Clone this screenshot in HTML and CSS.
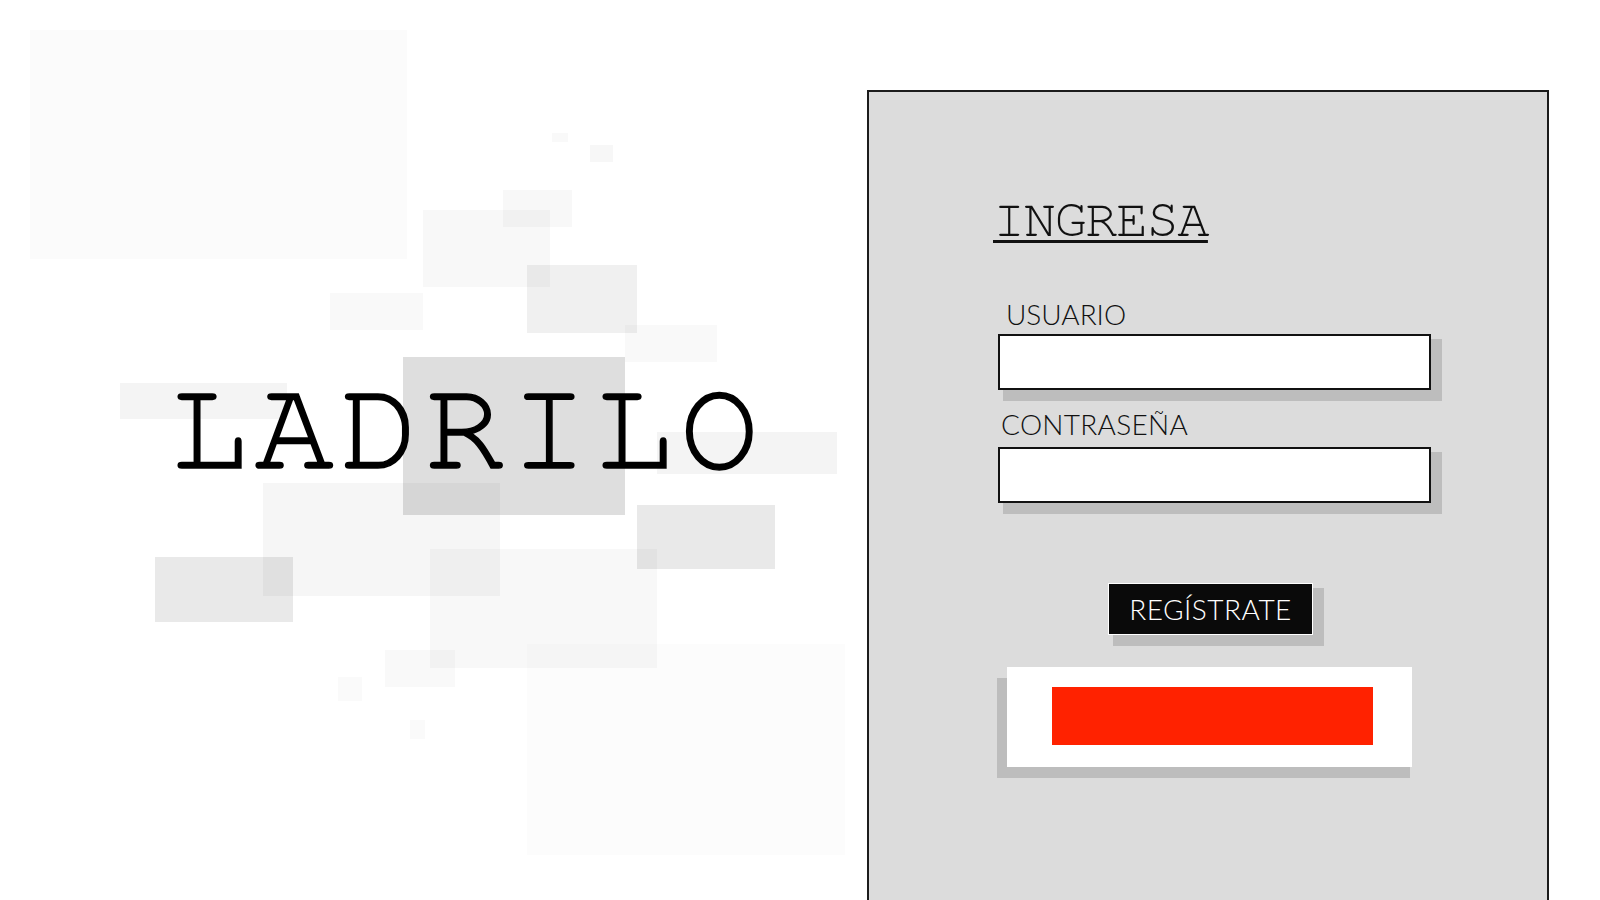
FILE: index.html
```html
<!DOCTYPE html>
<html lang="es">
<head>
<meta charset="utf-8">
<title>Ladrilo - Ingresa</title>
<link rel="stylesheet" href="styles.css">
</head>
<body>
<div class="page">
  <section class="hero">
    <div class="blk b1"></div>
    <div class="blk b2"></div>
    <div class="blk b3"></div>
    <div class="blk b4"></div>
    <div class="blk b5"></div>
    <div class="blk b6"></div>
    <div class="blk b7"></div>
    <div class="blk b8"></div>
    <div class="blk b9"></div>
    <div class="blk b10"></div>
    <div class="blk b11"></div>
    <div class="blk b12"></div>
    <div class="blk b13"></div>
    <div class="blk b14"></div>
    <div class="blk b15"></div>
    <div class="blk b16"></div>
    <div class="blk b17"></div>
    <div class="blk b18"></div>
    <div class="blk b19"></div>
    <h1 class="logo">LADRILO</h1>
  </section>
  <section class="panel">
    <form class="form">
      <h2 class="title">INGRESA</h2>
      <label class="label label-user" for="user">USUARIO</label>
      <input class="field" id="user" type="text">
      <label class="label label-pass" for="pass">CONTRASEÑA</label>
      <input class="field" id="pass" type="password">
      <button class="register" type="button">REGÍSTRATE</button>
      <div class="submit-box"><div class="submit-bar"></div></div>
    </form>
  </section>
</div>
</body>
</html>
```
FILE: styles.css
```css
html, body {
  margin: 0;
  padding: 0;
  background: #ffffff;
  overflow: hidden;
}

.page {
  display: flex;
  width: 1600px;
  height: 900px;
  overflow: hidden;
}

.hero {
  position: relative;
  width: 867px;
  height: 900px;
  flex-shrink: 0;
}

.blk {
  position: absolute;
  background: rgba(0, 0, 0, 0.024);
}
.b1  { left: 30px;  top: 30px;  width: 377px; height: 229px; background: rgba(0,0,0,0.016); }
.b2  { left: 552px; top: 133px; width: 16px;  height: 9px; }
.b3  { left: 590px; top: 145px; width: 23px;  height: 17px; background: rgba(0,0,0,0.03); }
.b4  { left: 503px; top: 190px; width: 69px;  height: 37px; background: rgba(0,0,0,0.027); }
.b5  { left: 423px; top: 210px; width: 127px; height: 77px; background: rgba(0,0,0,0.027); }
.b6  { left: 527px; top: 265px; width: 110px; height: 68px; background: rgba(0,0,0,0.059); }
.b7  { left: 330px; top: 293px; width: 93px;  height: 37px; }
.b8  { left: 625px; top: 325px; width: 92px;  height: 37px; }
.b9  { left: 120px; top: 383px; width: 167px; height: 36px; background: rgba(0,0,0,0.043); }
.b10 { left: 403px; top: 357px; width: 222px; height: 158px; background: rgba(0,0,0,0.129); }
.b11 { left: 657px; top: 432px; width: 180px; height: 42px; background: rgba(0,0,0,0.043); }
.b12 { left: 263px; top: 483px; width: 237px; height: 113px; background: rgba(0,0,0,0.035); }
.b13 { left: 637px; top: 505px; width: 138px; height: 64px; background: rgba(0,0,0,0.086); }
.b14 { left: 155px; top: 557px; width: 138px; height: 65px; background: rgba(0,0,0,0.086); }
.b15 { left: 430px; top: 549px; width: 227px; height: 119px; background: rgba(0,0,0,0.027); }
.b16 { left: 385px; top: 650px; width: 70px;  height: 37px; }
.b17 { left: 338px; top: 677px; width: 24px;  height: 24px; background: rgba(0,0,0,0.02); }
.b18 { left: 410px; top: 720px; width: 15px;  height: 19px; background: rgba(0,0,0,0.02); }
.b19 { left: 527px; top: 644px; width: 318px; height: 211px; background: rgba(0,0,0,0.012); }

.logo {
  position: relative;
  margin: 0;
  padding: 363px 0 0 170px;
  font-family: "Nimbus Mono PS", "Nimbus Mono L", "FreeMono", "Liberation Mono", monospace;
  font-weight: normal;
  font-size: 131px;
  line-height: 131px;
  letter-spacing: 6.4px;
  color: #000000;
  -webkit-text-stroke: 1.6px #000000;
}

.panel {
  position: relative;
  z-index: 0;
  box-sizing: border-box;
  width: 682px;
  height: 830px;
  margin-top: 90px;
  padding: 100px 0 0 129px;
  background: #dcdcdc;
  border: 2px solid #1c1c1c;
  flex-shrink: 0;
}

.form {
  display: flex;
  flex-direction: column;
  width: 433px;
  margin: 0;
}

.title {
  margin: 0 0 0 -5px;
  font-family: "Nimbus Mono PS", "Nimbus Mono L", "FreeMono", "Liberation Mono", monospace;
  font-weight: normal;
  font-size: 54px;
  line-height: 56px;
  height: 56px;
  letter-spacing: -1.7px;
  color: #111111;
  text-decoration: underline;
  text-decoration-thickness: 3px;
  text-underline-offset: 4px;
  align-self: flex-start;
}

.label {
  font-family: "Lato", "Open Sans", sans-serif;
  font-weight: 300;
  font-size: 28px;
  line-height: 28px;
  color: #111111;
}
.label-user { margin-top: 52px; padding-left: 8px; }
.label-pass { margin-top: 20px; padding-left: 3px; letter-spacing: 0.3px; }

.field {
  box-sizing: border-box;
  display: block;
  width: 433px;
  height: 56px;
  margin: 6px 0 0 0;
  padding: 0 10px;
  background: #ffffff;
  border: 2px solid #111111;
  border-radius: 0;
  box-shadow: 8px 8px 0 3px #bdbdbd;
  outline: none;
  font-size: 20px;
}
.label-pass + .field { margin-top: 9px; }

.register {
  box-sizing: border-box;
  align-self: flex-start;
  width: 205px;
  height: 52px;
  margin: 80px 0 0 110px;
  padding: 0;
  background: #0a0a0a;
  border: 1px solid #ffffff;
  border-radius: 0;
  box-shadow: 8px 8px 0 3px #bdbdbd;
  color: #ffffff;
  font-family: "Lato", "Open Sans", sans-serif;
  font-weight: 300;
  font-size: 28px;
  line-height: 50px;
  letter-spacing: 0.5px;
  cursor: pointer;
}

.submit-box {
  box-sizing: border-box;
  align-self: flex-start;
  width: 405px;
  height: 100px;
  margin: 32px 0 0 9px;
  padding: 20px 39px 22px 45px;
  background: #ffffff;
  box-shadow: -10px 11px 0 #bdbdbd, -2px 11px 0 #bdbdbd;
}

.submit-bar {
  height: 58px;
  background: #ff2200;
}
```
